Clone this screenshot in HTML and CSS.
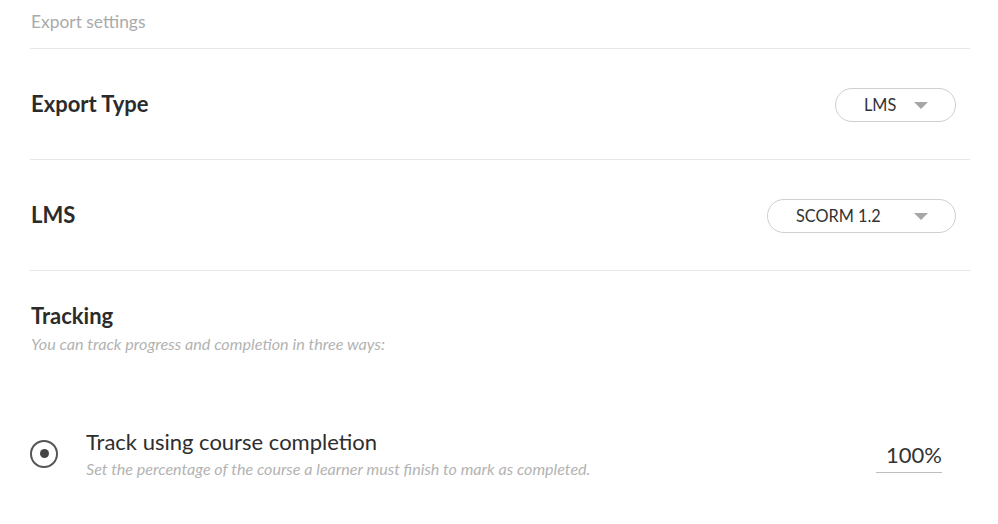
FILE: index.html
```html
<!DOCTYPE html>
<html lang="en">
<head>
<meta charset="utf-8">
<title>Export settings</title>
<link rel="stylesheet" href="styles.css">
</head>
<body>
<div class="page">
  <header class="page-header">Export settings</header>

  <section class="setting-row">
    <h2 class="setting-title">Export Type</h2>
    <div class="select select--narrow">
      <span class="select-value">LMS</span>
      <span class="select-caret"></span>
    </div>
  </section>

  <section class="setting-row">
    <h2 class="setting-title">LMS</h2>
    <div class="select select--wide">
      <span class="select-value">SCORM 1.2</span>
      <span class="select-caret"></span>
    </div>
  </section>

  <section class="tracking">
    <h2 class="setting-title">Tracking</h2>
    <p class="tracking-sub">You can track progress and completion in three ways:</p>

    <div class="option">
      <span class="radio"><span class="radio-dot"></span></span>
      <div class="option-text">
        <div class="option-title">Track using course completion</div>
        <div class="option-desc">Set the percentage of the course a learner must finish to mark as completed.</div>
      </div>
      <div class="percent">100%</div>
    </div>
  </section>
</div>
</body>
</html>
```
FILE: styles.css
```css
* { box-sizing: border-box; }
html, body { margin: 0; padding: 0; background: #fff; }
body {
  font-family: Lato, "Liberation Sans", sans-serif;
  color: #333;
}
.page {
  width: 940px;
  margin-left: 30px;
}
.page-header {
  height: 49px;
  padding-top: 11px;
  font-size: 17.4px;
  line-height: 22px;
  color: #aaaaaa;
  border-bottom: 1px solid #e6e6e6;
  padding-left: 1px;
}
.setting-row {
  height: 111px;
  display: flex;
  align-items: center;
  justify-content: space-between;
  padding-right: 14px;
  border-bottom: 1px solid #e6e6e6;
}
.setting-title {
  margin: 0;
  font-size: 22px;
  line-height: 28px;
  font-weight: 700;
  color: #2b2b2b;
  padding-left: 1px;
}
.select {
  height: 34px;
  border: 1px solid #cfcfcf;
  border-radius: 17px;
  display: flex;
  align-items: center;
  padding: 0 27px 0 28px;
  margin-top: 1px;
}
.select--narrow { width: 121px; }
.select--wide { width: 189px; }
.select-value {
  font-size: 16.3px;
  color: #333;
}
.select-caret {
  margin-left: auto;
  width: 0; height: 0;
  border-left: 7px solid transparent;
  border-right: 7px solid transparent;
  border-top: 7px solid #a6a6a6;
  margin-top: 2px;
}
.tracking {
  padding-top: 31px;
}
.tracking-sub {
  margin: 4px 0 0 0;
  padding-left: 1px;
  font-size: 16.2px;
  line-height: 20px;
  font-style: italic;
  color: #b3b3b3;
}
.option {
  margin-top: 74px;
  display: flex;
  align-items: center;
  padding-right: 28px;
}
.radio {
  width: 28px;
  height: 28px;
  border: 2px solid #555;
  border-radius: 50%;
  display: flex;
  align-items: center;
  justify-content: center;
  margin-right: 28px;
  flex: none;
}
.radio-dot {
  width: 9px; height: 9px;
  border-radius: 50%;
  background: #444;
}
.option-text { flex: 1; }
.option-title {
  font-size: 22px;
  color: #2e2e2e;
  line-height: 28px;
}
.option-desc {
  font-size: 16.1px;
  line-height: 20px;
  font-style: italic;
  color: #b3b3b3;
  margin-top: 3px;
}
.percent {
  width: 66px;
  text-align: right;
  font-size: 22px;
  line-height: 26px;
  color: #333;
  padding-bottom: 4px;
  border-bottom: 1px solid #bdbdbd;
  margin-top: 8px;
}
```
